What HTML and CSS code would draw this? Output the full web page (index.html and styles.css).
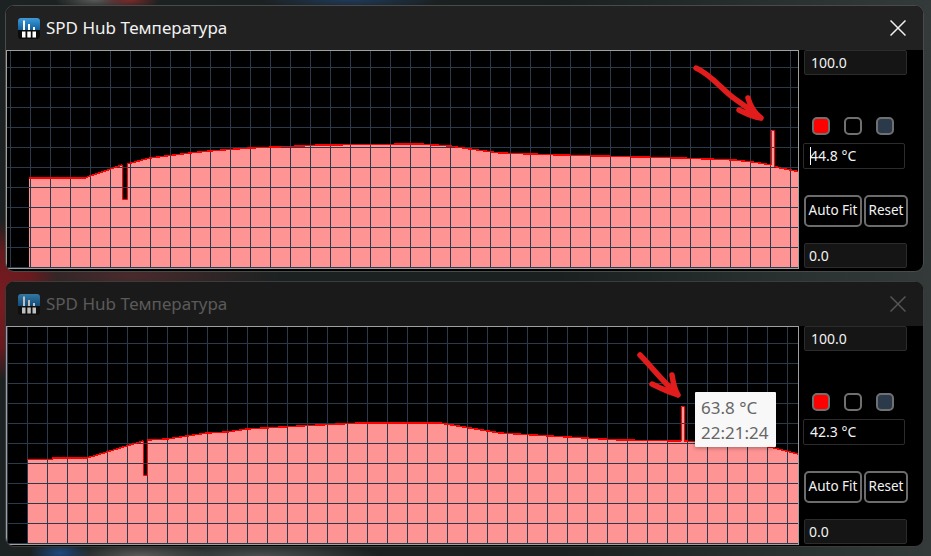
FILE: index.html
```html
<!DOCTYPE html>
<html lang="ru">
<head>
<meta charset="utf-8">
<title>SPD Hub Температура</title>
<link rel="stylesheet" href="styles.css">
</head>
<body>
<svg class="defs" width="0" height="0" aria-hidden="true">
  <defs>
    <linearGradient id="icon-blue" x1="0" y1="0" x2="0" y2="1">
      <stop offset="0" stop-color="#3f9ad8"/>
      <stop offset="1" stop-color="#0f5f9c"/>
    </linearGradient>
    <pattern id="grid-a" patternUnits="userSpaceOnUse" x="10" y="7" width="20" height="20">
      <rect class="grid-stroke" x="0" y="0" width="1" height="20"/>
      <rect class="grid-stroke" x="0" y="0" width="20" height="1"/>
    </pattern>
    <pattern id="grid-b" patternUnits="userSpaceOnUse" x="7" y="3" width="20" height="20">
      <rect class="grid-stroke" x="0" y="0" width="1" height="20"/>
      <rect class="grid-stroke" x="0" y="0" width="20" height="1"/>
    </pattern>
    <symbol id="app-icon" viewBox="0 0 22 21">
      <rect x="0" y="0" width="22" height="21" rx="3" fill="#0c0c0c"/>
      <path d="M0 3a3 3 0 0 1 3-3h16a3 3 0 0 1 3 3v9H0z" fill="url(#icon-blue)"/>
      <rect x="5" y="2.500" width="2" height="9.500" fill="#fff"/>
      <rect x="10" y="6" width="2" height="6" fill="#fff"/>
      <rect x="15" y="9" width="2" height="3" fill="#fff"/>
      <rect x="4" y="13.500" width="3.500" height="6" fill="#fff"/>
      <rect x="9.300" y="13.500" width="3.500" height="6" fill="#fff"/>
      <rect x="14.500" y="13.500" width="3.500" height="6" fill="#fff"/>
    </symbol>
  </defs>
</svg>

<section class="win win-a">
  <header class="titlebar">
    <svg class="app-icon" width="22" height="21"><use href="#app-icon"/></svg>
    <h1 class="title">SPD Hub Температура</h1>
    <svg class="close" width="16" height="16" viewBox="0 0 16 16"><path d="M.5.500l15 15M15.500.500l-15 15"/></svg>
  </header>
  <div class="body">
    <div class="plot">
      <svg class="chart" width="791" height="217" viewBox="7 51 791 217">
        <path class="area" d="M29 268V178H85L90 176L105 171L122 165V199H127V164L150 158L190 153L210 151L250 148L300 146L320 145L420 144L450 146L470 149L500 153L560 155L600 156L680 158L735 160L760 163L771 165V130H774V166L780 168L798 171.500V268Z"/>
        <rect x="7" y="51" width="791" height="217" fill="url(#grid-a)"/>
        <path class="line" d="M29 178H85L90 176L105 171L122 165M127 164L150 158L190 153L210 151L250 148L300 146L320 145L420 144L450 146L470 149L500 153L560 155L600 156L680 158L735 160L760 163L771 165M774 166L780 168L798 171.500"/>
        <path class="line-thin" d="M122.500 165V199.500H127.500V164M771.500 165V130.500H774.500V166"/>
        <path class="arrow" d="M696 68C712 75 722 90 735 99C745 106 753 112 761 118M748 98C750 105 753 112 761 118C752 117 745 113 739 110"/>
      </svg>
    </div>
    <aside class="side">
      <div class="field field-range">100.0</div>
      <div class="swatches">
        <span class="swatch swatch-red"></span>
        <span class="swatch"></span>
        <span class="swatch swatch-slate"></span>
      </div>
      <div class="field field-value"><span class="caret"></span>44.8 °C</div>
      <div class="buttons">
        <button class="btn btn-fit" type="button">Auto Fit</button>
        <button class="btn btn-reset" type="button">Reset</button>
      </div>
      <div class="field field-range field-min">0.0</div>
    </aside>
  </div>
</section>

<section class="win win-b">
  <header class="titlebar">
    <svg class="app-icon" width="22" height="21"><use href="#app-icon"/></svg>
    <h1 class="title">SPD Hub Температура</h1>
    <svg class="close" width="16" height="16" viewBox="0 0 16 16"><path d="M.5.500l15 15M15.500.500l-15 15"/></svg>
  </header>
  <div class="body">
    <div class="plot">
      <svg class="chart" width="791" height="217" viewBox="7 327 791 217">
        <path class="area" d="M27 544V459.500H52L53 458H87L107 452L143 441V475H147V440L167 439L187 436L207 433L227 432L247 429L300 426L360 423L440 423L470 428L500 433L550 436L620 440L681 441V406H684V441L770 447L798 454V544Z"/>
        <rect x="7" y="327" width="791" height="217" fill="url(#grid-b)"/>
        <path class="line" d="M27 459.500H52L53 458H87L107 452L143 441M147 440L167 439L187 436L207 433L227 432L247 429L300 426L360 423L440 423L470 428L500 433L550 436L620 440L681 441M684 441L770 447L798 454"/>
        <path class="line-thin" d="M143.500 441V475.500H147.500V440M681.500 441V406.500H684.500V441"/>
        <path class="arrow" d="M640 355C650 365 662 381 678 395M672 375C673 382 674 389 678 395C669 392 660 388 652 384"/>
      </svg>
      <div class="tooltip">63.8 °C<br>22:21:24</div>
    </div>
    <aside class="side">
      <div class="field field-range">100.0</div>
      <div class="swatches">
        <span class="swatch swatch-red"></span>
        <span class="swatch"></span>
        <span class="swatch swatch-slate"></span>
      </div>
      <div class="field field-value">42.3 °C</div>
      <div class="buttons">
        <button class="btn btn-fit" type="button">Auto Fit</button>
        <button class="btn btn-reset" type="button">Reset</button>
      </div>
      <div class="field field-range field-min">0.0</div>
    </aside>
  </div>
</section>
</body>
</html>
```

FILE: styles.css
```css
* { box-sizing: border-box; }

html, body { height: 100%; }

body {
  margin: 0;
  position: relative;
  overflow: hidden;
  font-family: "Noto Sans", "Open Sans", sans-serif;
  background:
    radial-gradient(60px 80px at 0px 300px, #7a1c20 0%, rgba(110, 25, 30, 0.9) 60%, rgba(80, 20, 25, 0) 100%),
    radial-gradient(150px 30px at 130px 276px, #4a2a2c 0%, rgba(60, 35, 35, 0) 100%),
    radial-gradient(30px 10px at 130px 0px, #7a2a2a 0%, rgba(120, 40, 40, 0) 100%),
    radial-gradient(40px 10px at 95px 0px, #5a5a58 0%, rgba(90, 90, 88, 0) 100%),
    radial-gradient(90px 10px at 350px 0px, #203a5a 0%, rgba(32, 58, 90, 0) 100%),
    radial-gradient(30px 12px at 60px 553px, #1f4a80 0%, rgba(31, 74, 128, 0) 100%),
    radial-gradient(70px 14px at 140px 556px, #5c5c5a 0%, rgba(92, 92, 90, 0) 100%),
    radial-gradient(120px 14px at 260px 556px, #4a4e4e 0%, rgba(74, 78, 78, 0) 100%),
    linear-gradient(90deg, #1c2222 0%, #1a2020 60%, #2c3434 90%, #343a3a 100%);
}

.defs { position: absolute; }

.win {
  position: absolute;
  left: 5px;
  width: 919px;
  display: flex;
  flex-direction: column;
  background: #000;
  border: 1px solid #4a4a4a;
  border-radius: 9px;
  overflow: hidden;
}

.win-a { top: 5px; height: 267px; }
.win-b { top: 281px; height: 266px; border-color: #3c3c3c; }

.titlebar {
  height: 44px;
  flex: none;
  display: flex;
  align-items: center;
  background: #222121;
  padding: 0 17px 0 12px;
}

.win-b .titlebar { background: #1a1a1a; }

.app-icon { flex: none; margin-right: 6px; }
.win-b .app-icon { opacity: 0.72; }

.title {
  flex: 1;
  margin: 0 0 2px;
  font-size: 17px;
  font-weight: 400;
  color: #f2f2f2;
}

.win-b .title { color: #5a5a5a; }

.close { flex: none; }
.close path { fill: none; stroke: #f0f0f0; stroke-width: 1.5; }
.win-b .close path { stroke: #555; }

.body { display: flex; flex: none; }

.plot {
  position: relative;
  flex: none;
  width: 793px;
  height: 219px;
  border: 1px solid #a0a0a0;
  background: #000;
}

.chart { display: block; }

.grid-stroke { fill: #2b3a4a; shape-rendering: crispEdges; }
.area { fill: #ff9494; }
.line { fill: none; stroke: #ff0000; stroke-width: 1.5; shape-rendering: crispEdges; }
.line-thin { fill: none; stroke: #ff0000; stroke-width: 1; }
.arrow { fill: none; stroke: #e01c1c; stroke-width: 5.5; stroke-linecap: round; stroke-linejoin: round; }

.tooltip {
  position: absolute;
  left: 688px;
  top: 65px;
  width: 81px;
  height: 55px;
  padding: 3px 0 0 6px;
  background: #f8f8f8;
  color: #666;
  font-size: 17px;
  line-height: 25px;
  box-shadow: 0 1px 4px rgba(0, 0, 0, 0.35);
  border-radius: 1px;
}

.side {
  flex: none;
  width: 120px;
  padding-left: 4px;
  display: flex;
  flex-direction: column;
  align-items: flex-start;
}

.field {
  width: 102px;
  height: 26px;
  display: flex;
  align-items: center;
  padding: 0 0 1px 6px;
  color: #f2f2f2;
  font-size: 14px;
  border: 1px solid #2c2c2c;
  border-radius: 2px;
  background: #000;
}

.field-range {
  width: 103px;
  height: 25px;
  margin-left: 1px;
  background: #151515;
}

.field-value { margin-top: 8px; }

.field-min { margin-top: 16px; padding-left: 4px; }

.caret {
  width: 1px;
  height: 18px;
  margin-right: -1px;
  background: #fff;
}

.swatches {
  display: flex;
  gap: 14px;
  margin: 42px 0 0 9px;
}

.swatch {
  width: 18px;
  height: 18px;
  border: 2px solid #707070;
  border-radius: 5px;
  background: #000;
}

.swatch-red { background: #ff0000; }
.swatch-slate { background: #2b3a4a; }

.buttons {
  display: flex;
  gap: 2px;
  margin: 26px 0 0 1px;
}

.btn {
  height: 32px;
  padding: 0 0 2px;
  border: 2px solid #6c6c6c;
  border-radius: 5px;
  background: #000;
  color: #f2f2f2;
  font: 400 13.500px "Noto Sans", "Open Sans", sans-serif;
}

.btn-fit { width: 58px; }
.btn-reset { width: 44px; }
```
